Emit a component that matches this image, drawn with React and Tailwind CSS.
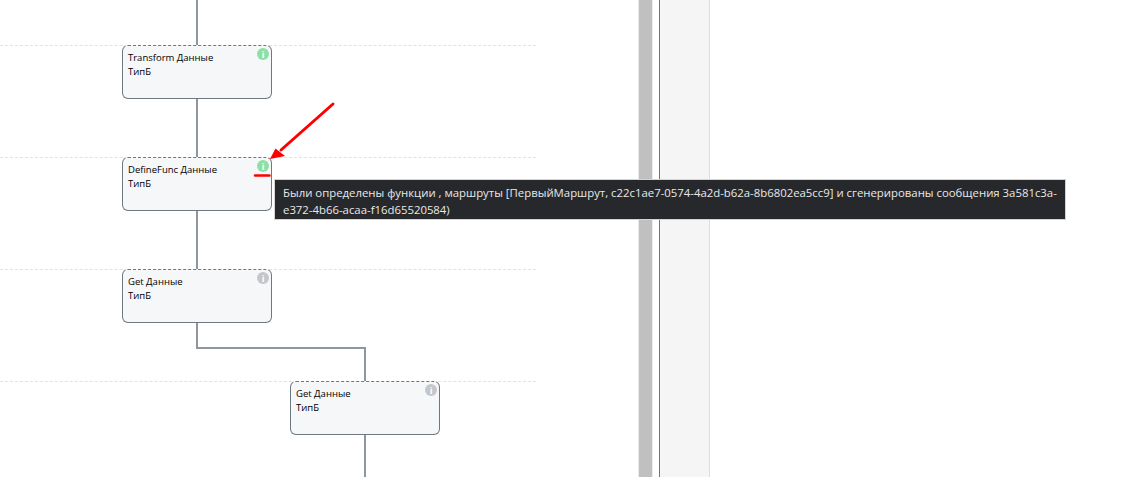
import React from "react";

const font = "[font-family:'Open_Sans','Noto_Sans',sans-serif]";

const Info = ({ on }) => (
  <div
    className={`absolute top-[2px] right-[2px] w-[12px] h-[12px] rounded-full flex items-center justify-center text-white text-[9px] font-bold leading-none ${
      on ? "bg-[#8fdfa4]" : "bg-[#c4c6c9]"
    }`}
  >
    i
  </div>
);

const Node = ({ x, y, name, on }) => (
  <div
    className="absolute w-[150px] h-[54px] bg-[#f6f7f9] border border-[#6f7780] [border-top-style:dashed] rounded-[6px] px-[5px] pt-[5px] text-[9.5px] leading-[14px] text-black"
    style={{ left: x, top: y }}
  >
    <Info on={on} />
    <div>{name} Данные</div>
    <div>ТипБ</div>
  </div>
);

const Dash = ({ y }) => (
  <div
    className="absolute left-0 w-[536px] border-t border-dashed border-[#e2e2e2]"
    style={{ top: y }}
  />
);

const Wire = ({ x, y, w, h }) => (
  <div className="absolute bg-[#8f979e]" style={{ left: x, top: y, width: w, height: h }} />
);

export default function App() {
  return (
    <div className={`w-[1136px] h-[477px] overflow-hidden relative bg-white flex ${font}`}>
      <div className="relative w-[638px] h-full">
        <Dash y={45} />
        <Dash y={157} />
        <Dash y={269} />
        <Dash y={381} />
        <Wire x={196} y={0} w={2} h={46} />
        <Wire x={196} y={98} w={2} h={60} />
        <Wire x={196} y={210} w={2} h={60} />
        <Wire x={196} y={322} w={2} h={26} />
        <Wire x={196} y={347} w={170} h={2} />
        <Wire x={364} y={347} w={2} h={35} />
        <Wire x={364} y={434} w={2} h={43} />
        <Node x={122} y={45} name="Transform" on />
        <Node x={122} y={157} name="DefineFunc" on />
        <Node x={122} y={269} name="Get" />
        <Node x={290} y={381} name="Get" />
      </div>

      <div className="w-[15px] h-full bg-[#c0c0c0] border-l border-r border-[#ebebeb]" />
      <div className="w-[6px] h-full" />
      <div className="w-[51px] h-full bg-[#f5f5f5] border-l border-l-[#6b7680] border-r border-r-[#dddddd]" />

      <svg className="absolute left-0 top-0" width="1136" height="477" viewBox="0 0 1136 477" fill="none">
        <path d="M333 104 L281 150" stroke="#ff0000" strokeWidth="3" strokeLinecap="round" />
        <path d="M270 159 L275.5 148.5 L285 156 Z" fill="#ff0000" />
        <path d="M255 175.5 H269.5" stroke="#ff0000" strokeWidth="2.5" strokeLinecap="round" />
      </svg>

      <div className="absolute left-[274px] top-[179px] w-[792px] h-[41px] bg-[#26282c] border border-[#d4d4d4] pl-[8px] pt-[4px] text-[11.36px] leading-[17px] text-[#e8e8e8] whitespace-nowrap">
        Были определены функции , маршруты [ПервыйМаршрут, c22c1ae7-0574-4a2d-b62a-8b6802ea5cc9] и сгенерированы сообщения 3a581c3a-
        <br />
        e372-4b66-acaa-f16d65520584)
      </div>
    </div>
  );
}
